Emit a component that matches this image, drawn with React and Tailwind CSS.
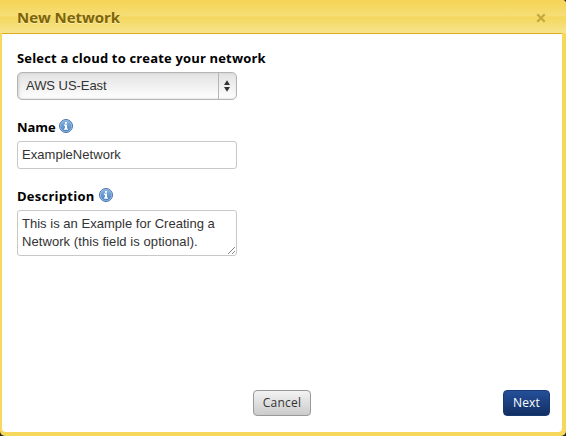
import React from 'react';

const ui = "font-['Open_Sans','Noto_Sans',sans-serif]";
const field = "font-['Liberation_Sans',Arial,sans-serif]";

function InfoIcon() {
  return (
    <svg className="block h-[14px] w-[14px]" viewBox="0 0 14 14">
      <defs>
        <linearGradient id="info" x1="0" y1="0" x2="0" y2="1">
          <stop offset="0" stopColor="#84b2e2" />
          <stop offset="1" stopColor="#4c83c2" />
        </linearGradient>
      </defs>
      <circle cx="7" cy="7" r="6.5" fill="#a4c4e8" stroke="#4672aa" strokeWidth="1" />
      <circle cx="7" cy="7" r="5.4" fill="url(#info)" />
      <path d="M6 3h2v1.7H6zM5 5.5H8v4h1v1.2H5V9.5h1V6.7H5z" fill="#fff" />
    </svg>
  );
}

export default function App() {
  return (
    <div className="h-[436px] w-[566px] overflow-hidden bg-[#222]">
      <div className={`flex h-full flex-col rounded-tr-[4px] rounded-b-[5px] bg-[#f6d85c] pr-1 pb-1 pl-0.5 ${ui}`}>
        <header className="-mr-1 -ml-0.5 flex h-[33px] shrink-0 items-center justify-between rounded-tr-[4px] bg-[linear-gradient(#f5d558_0,#f5d75e_5px,#f6de78_16px,#f4d75c_17px,#f7e48e_33px)] pt-[2px] pr-[20px] pl-[17px]">
          <h1 className="pb-px text-[15px] leading-none font-bold tracking-[-0.05px] text-[#7d6408] [text-shadow:0_1px_0_#fbeeb0]">New Network</h1>
          <svg className="h-[10px] w-[10px]" viewBox="0 0 10 10">
            <path d="M1.3 1.3L8.7 8.7M8.7 1.3L1.3 8.7" stroke="#c3a83c" strokeWidth="2.2" />
          </svg>
        </header>
        <div className="h-px shrink-0 bg-[#d9ad1f]" />
        <main className="flex min-h-0 flex-1 flex-col rounded-b-[4px] bg-white px-[15px]">
          <label className="mt-[17px] block h-[14px] text-[13px] leading-[14px] font-bold tracking-[0.17px] whitespace-nowrap text-black">Select a cloud to create your network</label>
          <div className="mt-[7px] flex h-[28px] w-[220px] overflow-hidden rounded-[5px] border border-[#b4b4b4] bg-linear-to-b from-[#e2e2e2] to-[#ffffff] shadow-[inset_1px_0_3px_#d0d0d0]">
            <div className={`flex-1 pl-2 text-[13px] leading-[26px] tracking-[-0.05px] text-[#333] ${field}`}>AWS US-East</div>
            <div className="flex w-[18px] items-center justify-center border-l border-[#b5b5b5] pr-px">
              <svg className="h-[12px] w-[6px]" viewBox="0 0 6 12">
                <path d="M3 0.3L6 5H0zM3 11.7L0 7H6z" fill="#333" />
              </svg>
            </div>
          </div>
          <div className="mt-[19px] flex h-[14px] items-center gap-1">
            <label className="w-[38px] pt-[2px] text-[13px] leading-[14px] font-bold tracking-[-0.1px] text-black">Name</label>
            <InfoIcon />
          </div>
          <div className={`mt-2 h-[28px] w-[220px] rounded-[3px] border border-[#c8c8c8] pl-1 text-[13px] leading-[26px] tracking-[0.04px] text-[#333] ${field}`}>ExampleNetwork</div>
          <div className="mt-[19px] flex h-[14px] items-center gap-1">
            <label className="w-[78px] pt-[2px] text-[13px] leading-[14px] font-bold tracking-[0.25px] text-black">Description</label>
            <InfoIcon />
          </div>
          <div className={`relative mt-2 h-[46px] w-[220px] rounded-[3px] border border-[#c8c8c8] pt-1 pl-1 text-[13px] leading-[18px] tracking-[0.02px] text-[#333] ${field}`}>
            <p className="whitespace-nowrap">This is an Example for Creating a</p>
            <p className="whitespace-nowrap tracking-[0.07px]">Network (this field is optional).</p>
            <svg className="absolute right-[1px] bottom-[1px] h-[7px] w-[7px]" viewBox="0 0 7 7">
              <path d="M0 7L7 0M4 7L7 4" stroke="#777" strokeWidth="0.9" />
            </svg>
          </div>
          <footer className="mt-auto mb-4 grid grid-cols-[1fr_auto_1fr] items-center">
            <span />
            <button className="h-[26px] w-[58px] rounded-[4px] border border-[#999] bg-linear-to-b from-[#f3f3f3] to-[#cbcbcb] text-[12px] leading-none tracking-[0.2px] text-[#333]">Cancel</button>
            <button className="-mr-[3px] h-[26px] w-[47px] justify-self-end rounded-[4px] border border-[#173a74] bg-linear-to-b from-[#24509a] to-[#122f62] text-[12px] leading-none tracking-[0.2px] text-white">Next</button>
          </footer>
        </main>
      </div>
    </div>
  );
}
